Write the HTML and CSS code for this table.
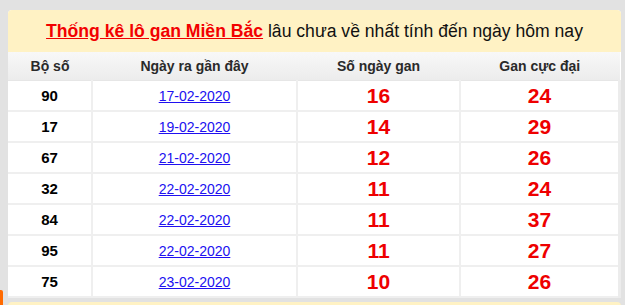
FILE: index.html
```html
<!DOCTYPE html>
<html lang="vi">
<head>
<meta charset="utf-8">
<link rel="stylesheet" href="styles.css">
</head>
<body>
<div class="page">
  <div class="card">
    <div class="card-title"><a class="title-link" href="#">Thống kê lô gan Miền Bắc</a> lâu chưa về nhất tính đến ngày hôm nay</div>
    <table class="gan-table">
      <thead>
        <tr><th class="c1">Bộ số</th><th class="c2">Ngày ra gần đây</th><th class="c3">Số ngày gan</th><th class="c4">Gan cực đại</th></tr>
      </thead>
      <tbody>
        <tr><td class="num">90</td><td><a class="date" href="#">17-02-2020</a></td><td class="red">16</td><td class="red">24</td></tr>
        <tr><td class="num">17</td><td><a class="date" href="#">19-02-2020</a></td><td class="red">14</td><td class="red">29</td></tr>
        <tr><td class="num">67</td><td><a class="date" href="#">21-02-2020</a></td><td class="red">12</td><td class="red">26</td></tr>
        <tr><td class="num">32</td><td><a class="date" href="#">22-02-2020</a></td><td class="red">11</td><td class="red">24</td></tr>
        <tr><td class="num">84</td><td><a class="date" href="#">22-02-2020</a></td><td class="red">11</td><td class="red">37</td></tr>
        <tr><td class="num">95</td><td><a class="date" href="#">22-02-2020</a></td><td class="red">11</td><td class="red">27</td></tr>
        <tr><td class="num">75</td><td><a class="date" href="#">23-02-2020</a></td><td class="red">10</td><td class="red">26</td></tr>
      </tbody>
    </table>
  </div>
  <div class="card next-card"></div>
</div>
<div class="side-tab"></div>
</body>
</html>
```
FILE: styles.css
```css
html, body {
  margin: 0;
  padding: 0;
}
body {
  background: #e2e2e2;
  font-family: "Liberation Sans", Arial, sans-serif;
  width: 625px;
  height: 305px;
  overflow: hidden;
  position: relative;
}
.page {
  padding: 10px 4px 0 8px;
  display: flex;
  flex-direction: column;
  gap: 4px;
}
.card {
  width: 613px;
  background: #fff;
  border-radius: 4px 4px 0 0;
  overflow: hidden;
}
.card-title {
  background: #fff2c4;
  height: 42px;
  line-height: 42px;
  text-align: center;
  font-size: 17.6px;
  color: #111;
}
.title-link {
  color: #f20000;
  font-weight: bold;
  text-decoration: underline;
}
.gan-table {
  width: 100%;
  border-collapse: collapse;
  table-layout: fixed;
}
.gan-table th {
  height: 28px;
  padding: 0;
  font-size: 14px;
  font-weight: bold;
  color: #2a2a2a;
  background: linear-gradient(#f8f8f8, #ececec);
  text-align: center;
  border-bottom: 1px solid #e6e6e6;
}
.c1 { width: 84px; }
.c2 { width: 205px; }
.c3 { width: 163px; }
.gan-table td {
  height: 29px;
  padding: 0;
  text-align: center;
  border: 2px solid #efefef;
  border-top: 0;
}
.gan-table td:first-child { border-left: 0; }
.gan-table td:last-child { border-right: 3px solid #ececec; }
.num {
  font-size: 15px;
  font-weight: bold;
  color: #000;
}
.date {
  font-size: 14px;
  color: #2010f0;
  text-decoration: underline;
}
.red {
  font-size: 21px;
  font-weight: bold;
  color: #ee0000;
}
.next-card {
  height: 4px;
  background: #fff2c4;
}
.side-tab {
  position: absolute;
  left: 0;
  top: 290px;
  width: 3px;
  height: 15px;
  background: #ff6a00;
  border-radius: 0 2px 0 0;
}
```
